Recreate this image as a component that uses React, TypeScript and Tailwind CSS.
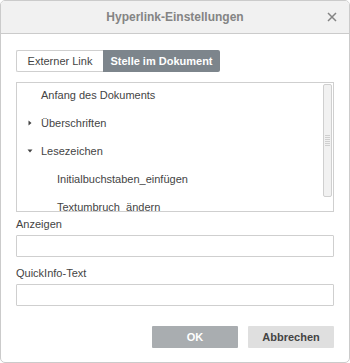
import React from 'react';

function Caret({ open }: { open: boolean }) {
  return (
    <svg width="8" height="8" viewBox="0 0 8 8" className="shrink-0">
      {open ? <path d="M1.5 2.5 L6.5 2.5 L4 5.5 Z" fill="#444" /> : <path d="M2.5 1.5 L5.5 4 L2.5 6.5 Z" fill="#444" />}
    </svg>
  );
}

export default function App() {
  const rows = [
    { label: 'Anfang des Dokuments', indent: 0, caret: null as null | boolean },
    { label: 'Überschriften', indent: 0, caret: false },
    { label: 'Lesezeichen', indent: 0, caret: true },
    { label: 'Initialbuchstaben_einfügen', indent: 1, caret: null },
    { label: 'Textumbruch_ändern', indent: 1, caret: null },
  ];

  return (
    <div className="w-[350px] h-[363px] bg-white text-[11px] text-[#444]" style={{ fontFamily: '"Liberation Sans", Arial, sans-serif' }}>
      <div className="w-[350px] h-[363px] border border-[#cbcbcb] rounded-[5px] overflow-hidden flex flex-col">
        <div className="h-[33px] shrink-0 bg-[#f1f1f1] border-b border-[#cbcbcb] flex items-center justify-center relative">
          <span className="text-[12px] font-bold text-[#848484]">Hyperlink-Einstellungen</span>
          <svg className="absolute right-[12px] top-[11px]" width="10" height="10" viewBox="0 0 10 10">
            <path d="M1 1 L9 9 M9 1 L1 9" stroke="#848484" strokeWidth="1.5" />
          </svg>
        </div>

        <div className="px-[15px] pt-[16px] flex flex-col">
          <div className="flex h-[22px]">
            <div className="w-[87px] border border-[#cfcfcf] border-r-0 rounded-l-[2px] flex items-center justify-center text-[#444]">Externer Link</div>
            <div className="w-[117px] bg-[#7d858c] rounded-r-[2px] flex items-center justify-center text-white font-bold">Stelle im Dokument</div>
          </div>

          <div className="mt-[10px] h-[130px] border border-[#cfcfcf] relative overflow-hidden">
            <div className="-mt-[2px] flex flex-col">
              {rows.map((r) => (
                <div key={r.label} className="h-[28px] flex items-center">
                  <div className={r.indent ? 'w-[25px]' : 'w-[9px]'} />
                  <div className="w-[15px] flex items-center">{r.caret !== null && <Caret open={r.caret} />}</div>
                  <span className="text-[#444]">{r.label}</span>
                </div>
              ))}
            </div>
            <div className="absolute right-[1px] top-[1px] w-[9px] h-[113px] bg-[#f1f1f1] border border-[#cfcfcf] rounded-[2px] flex flex-col items-center justify-center gap-[1px]">
              {[0, 1, 2, 3, 4, 5].map((i) => (
                <div key={i} className="w-[5px] h-[1px] bg-[#cfcfcf]" />
              ))}
            </div>
          </div>

          <div className="mt-[1px] h-[22px] flex items-center">Anzeigen</div>
          <div className="h-[22px] border border-[#cfcfcf] rounded-[1px]" />
          <div className="mt-[6px] h-[20px] flex items-center">QuickInfo-Text</div>
          <div className="mt-[1px] h-[22px] border border-[#cfcfcf] rounded-[1px]" />

          <div className="mt-[20px] flex justify-end gap-[10px]">
            <div className="w-[86px] h-[22px] bg-[#a9adb0] text-white font-bold flex items-center justify-center rounded-[1px]">OK</div>
            <div className="w-[86px] h-[22px] bg-[#dfdfdf] text-[#444] font-bold flex items-center justify-center rounded-[1px]">Abbrechen</div>
          </div>
        </div>
      </div>
    </div>
  );
}
